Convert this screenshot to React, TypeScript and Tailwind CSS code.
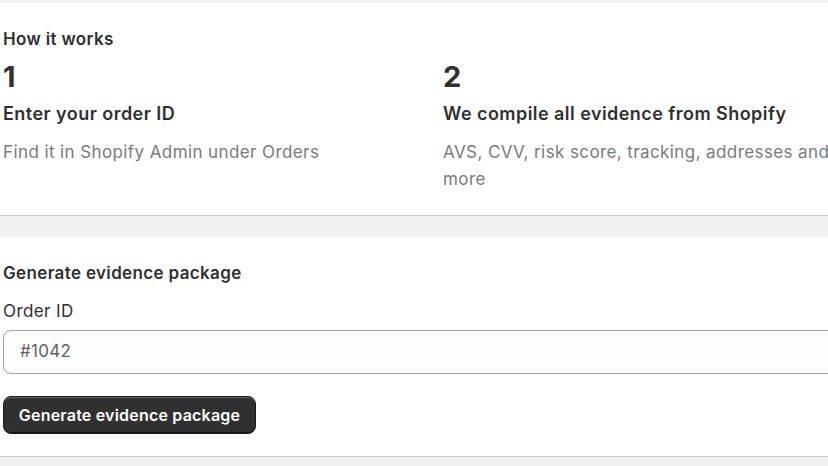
const font = "font-['Inter',_'Liberation_Sans',_sans-serif]";

function Step({ n, title, body, className }: { n: string; title: string; body: string; className?: string }) {
  return (
    <div className={className}>
      <div className="mt-2 text-[29px] leading-[36px] font-bold text-[#303030]">{n}</div>
      <div className="mt-[6px] text-[18px] leading-[26px] font-semibold tracking-[0.45px] text-[#303030]">{title}</div>
      <p className="mt-3 text-[17px] leading-[27px] tracking-[0.4px] text-[#7a7a7a]">{body}</p>
    </div>
  );
}

export default function App() {
  return (
    <div className={`${font} min-h-[466px] w-[828px] overflow-hidden bg-[#f1f1f1] pt-[3px]`}>
      <section className="h-[212px] w-[840px] bg-white pl-[3px] pt-6 shadow-[0_1px_0_0_rgba(0,0,0,0.16)]">
        <h2 className="text-[17px] leading-6 font-semibold tracking-[0.35px] text-[#303030]">How it works</h2>
        <div className="flex">
          <Step className="w-[440px] shrink-0" n="1" title="Enter your order ID" body="Find it in Shopify Admin under Orders" />
          <Step className="w-[392px] shrink-0" n="2" title="We compile all evidence from Shopify" body="AVS, CVV, risk score, tracking, addresses and more" />
        </div>
      </section>

      <section className="mt-[22px] h-[219px] w-[840px] bg-white pl-[3px] pt-6 shadow-[0_1px_0_0_rgba(0,0,0,0.16)]">
        <h2 className="text-[17px] leading-6 font-semibold tracking-[0.35px] text-[#303030]">Generate evidence package</h2>
        <label className="mt-[14px] block text-[17px] leading-6 tracking-[0.4px] text-[#303030]">Order ID</label>
        <div className="mt-[7px] flex h-11 items-center rounded-lg border border-[#a3a3a3] bg-[#fdfdfd] px-4 text-[17px] tracking-[0.3px] text-[#616161]">
          #1042
        </div>
        <button className="mt-[22px] flex h-[38px] w-[253px] items-center justify-center rounded-lg border border-[#1a1a1a] bg-[#303030] text-[16px] font-semibold tracking-[0.2px] text-white shadow-[inset_0_1px_0_0_rgba(255,255,255,0.25),inset_0_-1px_0_0_rgba(0,0,0,0.5)]">
          Generate evidence package
        </button>
      </section>
    </div>
  );
}
